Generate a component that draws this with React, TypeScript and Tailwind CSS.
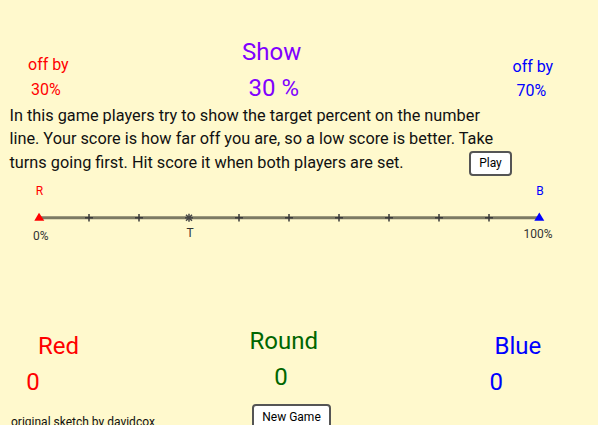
import React from "react";

function NumberLine() {
  const ticks = [89, 139, 239, 289, 339, 389, 439, 489];
  return (
    <svg width="598" height="71" viewBox="0 174 598 71" className="block">
      <text x="39.5" y="195" fontSize="12" fill="#ff0000" textAnchor="middle" fontFamily="Roboto, sans-serif">R</text>
      <text x="540" y="195" fontSize="12" fill="#0000ff" textAnchor="middle" fontFamily="Roboto, sans-serif">B</text>
      <line x1="39" y1="217.8" x2="539" y2="217.8" stroke="#7c7a63" strokeWidth="3" />
      {ticks.map((x) => (
        <g key={x} stroke="#3a3a3a" strokeWidth="1.5">
          <line x1={x} y1="214" x2={x} y2="221.6" />
          <line x1={x - 4} y1="217.8" x2={x + 4} y2="217.8" />
        </g>
      ))}
      <g stroke="#444" strokeWidth="1.5">
        <line x1="189" y1="213.8" x2="189" y2="221.8" />
        <line x1="185" y1="217.8" x2="193" y2="217.8" />
        <line x1="186" y1="214.8" x2="192" y2="220.8" />
        <line x1="192" y1="214.8" x2="186" y2="220.8" />
      </g>
      <polygon points="39,212.7 34.3,220.7 44.3,220.7" fill="#ff0000" />
      <polygon points="539.3,212.5 534.3,220.7 544.3,220.7" fill="#0000ff" />
      <text x="33" y="240" fontSize="12" fill="#333" fontFamily="Roboto, sans-serif">0%</text>
      <text x="190" y="237" fontSize="12" fill="#333" textAnchor="middle" fontFamily="Roboto, sans-serif">T</text>
      <text x="523.5" y="238" fontSize="12" fill="#333" fontFamily="Roboto, sans-serif">100%</text>
    </svg>
  );
}

function Btn({ label, w }: { label: string; w: string }) {
  return (
    <div
      className={`${w} h-[25px] shrink-0 bg-white border-2 border-[#555] rounded-[4px] flex items-center justify-center text-[12px] leading-none text-black`}
    >
      {label}
    </div>
  );
}

export default function App() {
  return (
    <div className="w-[600px] h-[425px] bg-white flex overflow-hidden font-['Roboto',sans-serif]">
      <div className="w-[598px] h-[425px] bg-[#fff9cd] overflow-hidden flex flex-col">
        {/* top row */}
        <div className="h-[104px] shrink-0 flex items-start">
          <div className="w-[242px] shrink-0 pl-[28px] pt-[56.5px] text-[16px] leading-none text-[#ff0000]">
            <div>off by</div>
            <div className="pl-[3px] mt-[9px]">30%</div>
          </div>
          <div className="w-[270px] shrink-0 pt-[40px] text-[24px] leading-none text-[#8000ff]">
            <div>Show</div>
            <div className="pl-[6.5px] mt-[12px]">30 %</div>
          </div>
          <div className="pt-[58.5px] text-[16px] leading-none text-[#0000ff]">
            <div className="pl-[0.5px]">off by</div>
            <div className="pl-[4.5px] mt-[8px]">70%</div>
          </div>
        </div>

        {/* paragraph */}
        <div className="h-[70px] shrink-0 pl-[9.5px] w-[512px] text-[16.3px] leading-[23.3px] text-[#111]">
          <div className="h-[23.3px] whitespace-nowrap">In this game players try to show the target percent on the number</div>
          <div className="h-[23.3px] whitespace-nowrap">line. Your score is how far off you are, so a low score is better. Take</div>
          <div className="h-[23.3px] flex items-center justify-between whitespace-nowrap">
            <span>turns going first. Hit score it when both players are set.</span>
            <div className="mt-[2px]">
              <Btn label="Play" w="w-[43px]" />
            </div>
          </div>
        </div>

        {/* number line */}
        <div className="h-[71px] shrink-0">
          <NumberLine />
        </div>

        {/* scores */}
        <div className="h-[159px] shrink-0 flex items-start text-[24px] leading-none">
          <div className="w-[249.5px] shrink-0 pt-[88.8px] text-[#ff0000]">
            <div className="pl-[38px]">Red</div>
            <div className="pl-[26.3px] mt-[12px]">0</div>
          </div>
          <div className="w-[240px] shrink-0 pt-[84px] text-[#006600]">
            <div>Round</div>
            <div className="pl-[24.8px] mt-[11.8px]">0</div>
          </div>
          <div className="pt-[88.8px] text-[#0000ff]">
            <div className="pl-[5px]">Blue</div>
            <div className="mt-[12px]">0</div>
          </div>
        </div>

        {/* footer */}
        <div className="flex items-start shrink-0">
          <div className="w-[252px] shrink-0 pl-[11px] pt-[12px] text-[12px] leading-none text-[#111] whitespace-nowrap">
            original sketch by davidcox
          </div>
          <Btn label="New Game" w="w-[79px]" />
        </div>
      </div>
    </div>
  );
}
